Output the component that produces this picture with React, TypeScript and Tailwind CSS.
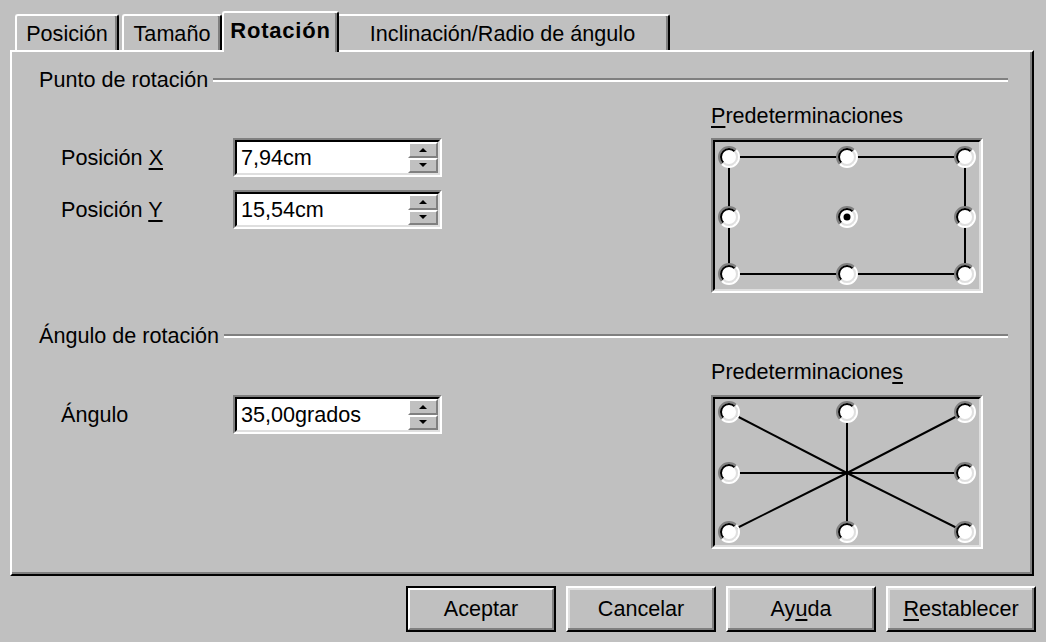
import React from "react";

const font = "font-['Liberation_Sans',Arial,sans-serif]";

function Tab({
  label,
  selected,
  className,
}: {
  label: string;
  selected?: boolean;
  className: string;
}) {
  if (selected) {
    return (
      <div
        className={`relative z-10 -mb-[2px] flex h-[41px] items-center justify-center rounded-t-[3px] border-t-2 border-l-2 border-r-2 border-t-white border-l-white border-r-black bg-[#c0c0c0] pb-[3px] text-[22px] font-bold tracking-[0.8px] shadow-[inset_-2px_0_0_#808080] ${className}`}
      >
        {label}
      </div>
    );
  }
  return (
    <div
      className={`flex h-[36px] items-center justify-center rounded-t-[3px] border-t-2 border-l-2 border-r-2 border-t-white border-l-white border-r-black pt-[2px] shadow-[inset_-2px_0_0_#808080] ${className}`}
    >
      {label}
    </div>
  );
}

function GroupHeader({ title }: { title: string }) {
  return (
    <div className="flex h-[22px] items-center">
      <span className="whitespace-nowrap pr-[5px]">{title}</span>
      <div className="h-[4px] flex-1 border-t-2 border-b-2 border-t-[#808080] border-b-white" />
    </div>
  );
}

function Arrow({ up }: { up?: boolean }) {
  return (
    <svg width="8" height="4" viewBox="0 0 8 4">
      {up ? (
        <polygon points="4,0 8,4 0,4" fill="black" />
      ) : (
        <polygon points="0,0 8,0 4,4" fill="black" />
      )}
    </svg>
  );
}

function SpinButton({ up }: { up?: boolean }) {
  return (
    <div className="flex flex-1 items-center justify-center border-2 border-t-white border-l-white border-b-[#808080] border-r-[#808080] bg-[#c0c0c0]">
      <Arrow up={up} />
    </div>
  );
}

function SpinField({ value }: { value: string }) {
  return (
    <div className="flex h-[39px] w-[209px] border-2 border-t-[#808080] border-l-[#808080] border-b-white border-r-white">
      <div className="flex flex-1 border-2 border-t-black border-l-black border-b-[#dfdfdf] border-r-[#dfdfdf] bg-white">
        <div className="flex flex-1 items-center pl-[4px]">{value}</div>
        <div className="flex w-[30px] flex-col">
          <SpinButton up />
          <SpinButton />
        </div>
      </div>
    </div>
  );
}

function Radio({ cx, cy, dot }: { cx: number; cy: number; dot?: boolean }) {
  const arc = (r: number, topLeft: boolean) => {
    const d = r * Math.SQRT1_2;
    return topLeft
      ? `M ${cx + d} ${cy - d} A ${r} ${r} 0 0 0 ${cx - d} ${cy + d}`
      : `M ${cx - d} ${cy + d} A ${r} ${r} 0 0 0 ${cx + d} ${cy - d}`;
  };
  return (
    <g>
      <circle cx={cx} cy={cy} r={9} fill="white" />
      <path d={arc(10, true)} stroke="#808080" strokeWidth={2} fill="none" />
      <path d={arc(10, false)} stroke="white" strokeWidth={2} fill="none" />
      <path d={arc(8, true)} stroke="black" strokeWidth={2} fill="none" />
      <path d={arc(8, false)} stroke="#dfdfdf" strokeWidth={2} fill="none" />
      {dot && <circle cx={cx} cy={cy} r={3.5} fill="black" />}
    </g>
  );
}

function PresetBox({ star, ys, h }: { star?: boolean; ys: number[]; h: number }) {
  const xs = [18, 136, 254];
  const points: [number, number][] = [];
  ys.forEach((y, r) =>
    xs.forEach((x, c) => {
      if (!(r === 1 && c === 1 && star)) points.push([x, y]);
    })
  );
  const [mx, my] = [xs[1], ys[1]];
  return (
    <div
      className="w-[272px] border-2 border-t-[#808080] border-l-[#808080] border-b-white border-r-white"
      style={{ height: h }}
    >
      <div className="h-full w-full border-2 border-t-black border-l-black border-b-[#dfdfdf] border-r-[#dfdfdf]">
        <svg width={264} height={h - 8} viewBox={`4 4 264 ${h - 8}`}>
          {star ? (
            points.map(([x, y]) => (
              <line key={`l${x}-${y}`} x1={x} y1={y} x2={mx} y2={my} stroke="black" strokeWidth={2} />
            ))
          ) : (
            <rect x={xs[0]} y={ys[0]} width={xs[2] - xs[0]} height={ys[2] - ys[0]} fill="none" stroke="black" strokeWidth={2} />
          )}
          {points.map(([x, y]) => (
            <Radio key={`r${x}-${y}`} cx={x} cy={y} dot={!star && x === mx && y === my} />
          ))}
        </svg>
      </div>
    </div>
  );
}

function Button({ children, primary }: { children: React.ReactNode; primary?: boolean }) {
  if (primary) {
    return (
      <div className="h-[46px] w-[150px] border-2 border-black">
        <div className="flex h-full w-full items-center justify-center border-2 border-t-white border-l-white border-b-[#808080] border-r-[#808080]">
          {children}
        </div>
      </div>
    );
  }
  return (
    <div className="flex h-[46px] w-[150px] items-center justify-center border-2 border-t-white border-l-white border-b-black border-r-black shadow-[inset_-2px_-2px_0_#808080,inset_2px_2px_0_#dfdfdf]">
      {children}
    </div>
  );
}

const u = "underline decoration-2 underline-offset-[3px]";

export default function App() {
  return (
    <div className={`h-[642px] w-[1046px] overflow-hidden bg-[#c0c0c0] px-[10px] text-[21.6px] leading-none text-black ${font}`}>
      <div className="flex h-[50px] items-end pl-[5px]">
        <Tab label="Posición" className="w-[104px]" />
        <Tab label="Tamaño" className="ml-[3px] w-[100px]" />
        <Tab label="Rotación" selected className="w-[117px]" />
        <Tab label="Inclinación/Radio de ángulo" className="-ml-[4px] w-[335px]" />
      </div>

      <div className="flex h-[526px] w-[1024px] flex-col border-2 border-t-white border-l-white border-b-black border-r-black pt-[17px] pr-[24px] pl-[27px] shadow-[inset_-2px_-2px_0_#808080]">
        <GroupHeader title="Punto de rotación" />
        <div className="mt-[13px] flex">
          <div className="ml-[22px] flex flex-1 flex-col gap-[13px] pt-[34px]">
            <div className="flex items-center">
              <span className="w-[172px]">
                Posición <span className={u}>X</span>
              </span>
              <SpinField value="7,94cm" />
            </div>
            <div className="flex items-center">
              <span className="w-[172px]">
                Posición <span className={u}>Y</span>
              </span>
              <SpinField value="15,54cm" />
            </div>
          </div>
          <div className="mr-[25px] flex w-[272px] flex-col">
            <div className="flex h-[23px] items-center">
              <span>
                <span className={u}>P</span>redeterminaciones
              </span>
            </div>
            <div className="mt-[11px]">
              <PresetBox ys={[19, 79, 136]} h={155} />
            </div>
          </div>
        </div>

        <div className="mt-[32px]">
          <GroupHeader title="Ángulo de rotación" />
        </div>
        <div className="mt-[13px] flex">
          <div className="ml-[22px] flex flex-1 flex-col pt-[35px]">
            <div className="flex items-center">
              <span className="w-[172px]">Ángulo</span>
              <SpinField value="35,00grados" />
            </div>
          </div>
          <div className="mr-[25px] flex w-[272px] flex-col">
            <div className="flex h-[23px] items-center">
              <span>
                Predeterminacione<span className={u}>s</span>
              </span>
            </div>
            <div className="mt-[12px]">
              <PresetBox star ys={[17, 78, 137]} h={154} />
            </div>
          </div>
        </div>
      </div>

      <div className="mt-[10px] flex justify-end gap-[10px]">
        <Button primary>Aceptar</Button>
        <Button>Cancelar</Button>
        <Button>
          Ay<span className={u}>u</span>da
        </Button>
        <Button>
          <span className={u}>R</span>establecer
        </Button>
      </div>
    </div>
  );
}
